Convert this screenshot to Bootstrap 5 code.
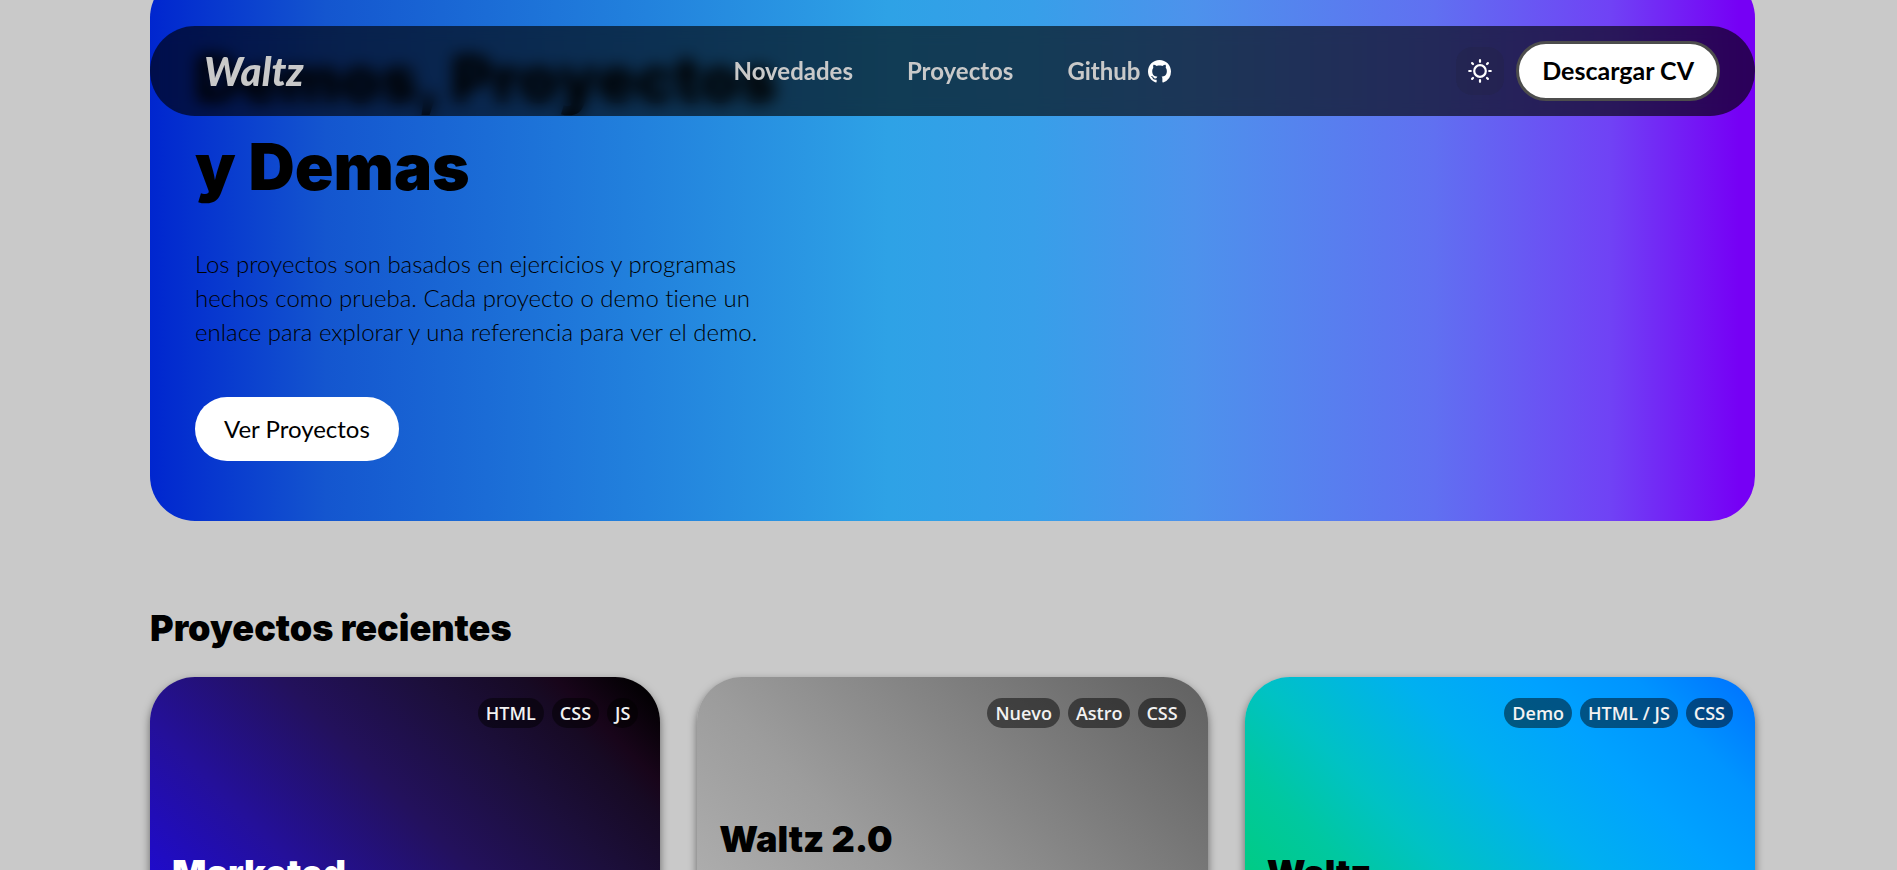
<!DOCTYPE html>
<html lang="es">
<head>
<meta charset="utf-8">
<meta name="viewport" content="width=device-width, initial-scale=1">
<title>Waltz</title>
<link href="https://cdn.jsdelivr.net/npm/bootstrap@5.3.0/dist/css/bootstrap.min.css" rel="stylesheet">
<style>
:root { --edge-l: 150px; --edge-r: 142px; }
body { background: #c9c9c9; color: #000; font-family: Lato, sans-serif; font-variant-ligatures: none; height: 100vh; overflow: hidden; }
h1, h2, h3 { font-family: Inter, sans-serif; font-weight: 900; margin: 0; }
a { color: inherit; text-decoration: none; }
.site-bar { top: 26px; left: var(--edge-l); right: var(--edge-r); height: 90px; padding: 0 35px; border-radius: 45px; background: rgba(0,0,0,.63); backdrop-filter: blur(8px); color: #c9c9c9; }
.brand { padding-left: 19px; font-size: 40px; font-weight: 900; font-style: italic; line-height: 48px; }
.site-links { gap: 54px; font-size: 24px; font-weight: 700; }
.site-links svg { width: 23px; height: 23px; color: #fff; }
.side { flex: 1 1 0; }
.theme-btn { width: 48px; height: 48px; border: 0; border-radius: 16px; background: rgba(32,32,64,.3); color: #fff; }
.cv-btn { height: 60px; padding: 0 23px; border: 3px solid #4d4d4d; border-radius: 30px; background: #fff; color: #000; font-size: 25px; font-weight: 700; }
main { padding: 0 var(--edge-r) 0 var(--edge-l); }
.hero { margin-top: -27px; padding: 62px 45px 60px; border-radius: 45px; background: linear-gradient(90deg, #0026cf 0%, #1456cf 11%, #2282dd 31%, #2ea2e6 46%, #379fe9 55%, #4d92ec 65%, #6070f1 80%, #7042f5 91%, #7600f5 99%); }
.hero h1 { font-size: 64px; line-height: 88px; }
.hero p { max-width: 620px; margin: 36px 0 48px; font-size: 24px; line-height: 34px; font-weight: 300; }
.see-btn { height: 64px; padding: 0 29px; border: 0; border-radius: 32px; background: #fff; font-size: 24px; color: #000; }
.recent { padding-top: 87px; }
.recent h2 { font-size: 36px; line-height: 40px; margin-bottom: 29px; }
.projects { display: grid; grid-template-columns: repeat(3, 1fr); gap: 37px; }
.project { height: 370px; padding: 21px 22px; border-radius: 45px; box-shadow: 0 4px 8px rgba(0,0,0,.5); }
.project h3 { font-size: 36px; line-height: 40px; margin-top: 125px; }
.project.raised h3 { margin-top: 91px; }
.tag { height: 30px; padding: 0 8px; border-radius: 15px; background: rgba(0,0,0,.48); color: #f2f2f2; font-family: "Open Sans", sans-serif; font-size: 18px; line-height: 30px; font-weight: 600; }
.night { background: linear-gradient(45deg, #1c08e0 10%, #1f0bca 20%, #24109a 37%, #23115c 57%, #1c0f3c 72%, #170a24 84%, #18051a 88%, #000 98%); color: #fff; }
.steel { background: linear-gradient(45deg, #b0b0b0 15%, #9c9c9c 42%, #7d7d7d 72%, #606060 100%); }
.ocean { background: linear-gradient(45deg, #00cc80 18%, #00c8a0 32%, #00c2c4 43%, #00b0f0 60%, #00a2ff 74%, #0094ff 86%, #0070ff 100%); }
</style>
</head>
<body>
<header class="site-bar position-fixed d-flex align-items-center z-3">
  <div class="side"><a class="brand" href="#">Waltz</a></div>
  <nav class="site-links d-flex align-items-center">
    <a href="#novedades">Novedades</a>
    <a href="#proyectos">Proyectos</a>
    <a href="#github" class="d-flex align-items-center gap-2">Github
      <svg viewBox="0 0 16 16" fill="currentColor" aria-hidden="true"><path d="M8 0C3.58 0 0 3.58 0 8c0 3.54 2.29 6.53 5.47 7.59.4.07.55-.17.55-.38 0-.19-.01-.82-.01-1.49-2.01.37-2.53-.49-2.69-.94-.09-.23-.48-.94-.82-1.13-.28-.15-.68-.52-.01-.53.63-.01 1.08.58 1.23.82.72 1.21 1.87.87 2.33.66.07-.52.28-.87.51-1.07-1.78-.2-3.64-.89-3.64-3.95 0-.87.31-1.59.82-2.15-.08-.2-.36-1.02.08-2.12 0 0 .67-.21 2.2.82.64-.18 1.32-.27 2-.27s1.36.09 2 .27c1.53-1.04 2.2-.82 2.2-.82.44 1.1.16 1.92.08 2.12.51.56.82 1.27.82 2.15 0 3.07-1.87 3.75-3.65 3.95.29.25.54.73.54 1.48 0 1.07-.01 1.93-.01 2.2 0 .21.15.46.55.38A8.01 8.01 0 0 0 16 8c0-4.42-3.58-8-8-8z"/></svg>
    </a>
  </nav>
  <div class="side d-flex justify-content-end align-items-center">
    <button class="theme-btn d-flex align-items-center justify-content-center me-2" type="button" aria-label="Cambiar tema">
      <svg width="24" height="24" viewBox="0 0 24 24" fill="none" stroke="currentColor" stroke-width="2.200" stroke-linecap="round" aria-hidden="true"><circle cx="12" cy="12" r="5.800"/><path d="M12 1.200v1.600M12 21.200v1.600M1.200 12h1.600M21.200 12h1.600M4.100 4.100l.9.9M19 19l.9.9M4.100 19.900l.9-.9M19 5l.9-.9"/></svg>
    </button>
    <button class="cv-btn ms-1" type="button">Descargar CV</button>
  </div>
</header>
<main>
  <section class="hero" id="novedades">
    <h1>Demos, Proyectos<br>y Demas</h1>
    <p>Los proyectos son basados en ejercicios y programas<br>hechos como prueba. Cada proyecto o demo tiene un<br>enlace para explorar y una referencia para ver el demo.</p>
    <button class="see-btn" type="button">Ver Proyectos</button>
  </section>
  <section class="recent" id="proyectos">
    <h2>Proyectos recientes</h2>
    <div class="projects">
      <article class="project night">
        <div class="d-flex justify-content-end gap-2"><span class="tag">HTML</span><span class="tag">CSS</span><span class="tag">JS</span></div>
        <h3>Marketed</h3>
      </article>
      <article class="project steel raised">
        <div class="d-flex justify-content-end gap-2"><span class="tag">Nuevo</span><span class="tag">Astro</span><span class="tag">CSS</span></div>
        <h3>Waltz 2.0</h3>
      </article>
      <article class="project ocean">
        <div class="d-flex justify-content-end gap-2"><span class="tag">Demo</span><span class="tag">HTML / JS</span><span class="tag">CSS</span></div>
        <h3>Waltz</h3>
      </article>
    </div>
  </section>
</main>
<script src="https://cdn.jsdelivr.net/npm/bootstrap@5.3.0/dist/js/bootstrap.bundle.min.js"></script>
</body>
</html>
